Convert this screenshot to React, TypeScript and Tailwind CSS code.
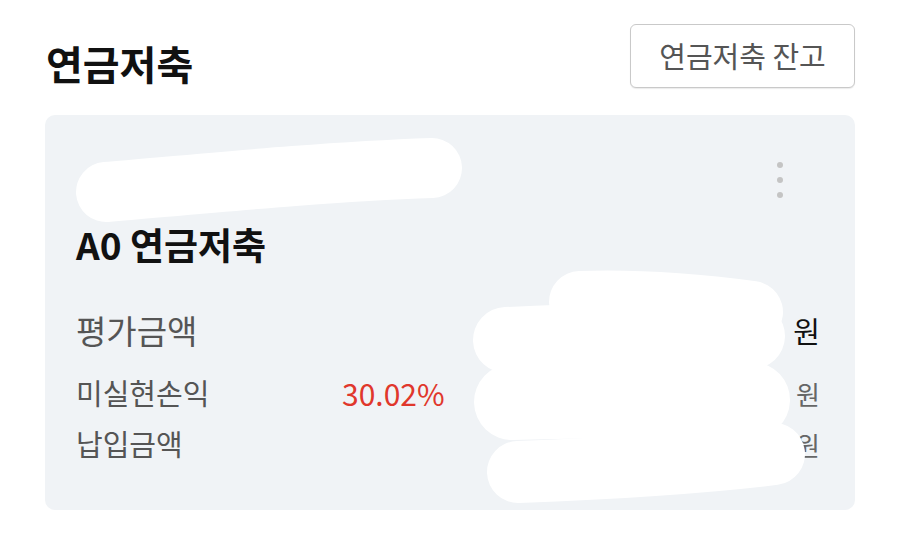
import React from 'react';

const font = { fontFamily: '"Noto Sans CJK KR", "Noto Sans", sans-serif' };

// white redaction strokes painted over the screenshot
const Redactions: React.FC = () => (
  <svg className="pointer-events-none absolute inset-0" width={900} height={540} viewBox="0 0 900 540">
    <g stroke="#ffffff" strokeLinecap="round" fill="none">
      <path d="M106 192 C 200 184, 320 172, 432 168" strokeWidth={60} />
      <path d="M580 302 C 640 300, 700 305, 752 312" strokeWidth={62} />
      <path d="M506 340 C 600 336, 680 334, 752 336" strokeWidth={66} />
      <path d="M512 402 C 600 400, 690 398, 752 400" strokeWidth={76} />
      <path d="M518 472 C 620 468, 710 462, 774 454" strokeWidth={62} />
    </g>
  </svg>
);

const Row: React.FC<{ label: string; rate?: string; big?: boolean; className?: string }> = ({ label, rate, big, className }) => (
  <div className={`flex items-center ${big ? 'h-[44px]' : 'h-[40px]'} ${className ?? ''}`}>
    <span className={`w-[266px] text-[#555] ${big ? 'text-[33px]' : 'text-[29px]'}`}>{label}</span>
    <span className="flex-1 text-[30px] text-[#e0372c]">{rate}</span>
    <span className={big ? 'text-[29px] text-[#111]' : 'text-[26px] text-[#666]'}>원</span>
  </div>
);

const App: React.FC = () => {
  return (
    <div className="relative h-[540px] w-[900px] bg-white px-[45px] pt-[24px]" style={font}>
      <div className="flex h-[64px] items-center justify-between">
        <h1 className="pl-[1px] pt-[14px] text-[40px] font-bold text-[#111]">연금저축</h1>
        <button className="h-[64px] w-[225px] rounded-md border border-[#c9c9c9] bg-white text-[29px] text-[#555] shadow-[0_1px_1px_rgba(0,0,0,0.08)]">
          연금저축 잔고
        </button>
      </div>

      <div className="mt-[27px] h-[395px] rounded-[10px] bg-[#f0f3f6] pl-[31px] pr-[35px]">
        <div className="flex justify-end pr-[37px] pt-[47px]">
          <div className="flex flex-col gap-[9px]">
            <span className="h-[6px] w-[6px] rounded-full bg-[#c4c4c4]" />
            <span className="h-[6px] w-[6px] rounded-full bg-[#c4c4c4]" />
            <span className="h-[6px] w-[6px] rounded-full bg-[#c4c4c4]" />
          </div>
        </div>
        <div className="mt-[24px] h-[44px] text-[37px] font-bold leading-[44px] text-[#111]">A0 연금저축</div>
        <Row label="평가금액" big className="mt-[43px]" />
        <Row label="미실현손익" rate="30.02%" className="mt-[20px]" />
        <Row label="납입금액" className="mt-[11px]" />
      </div>

      <Redactions />
    </div>
  );
};

export default App;
